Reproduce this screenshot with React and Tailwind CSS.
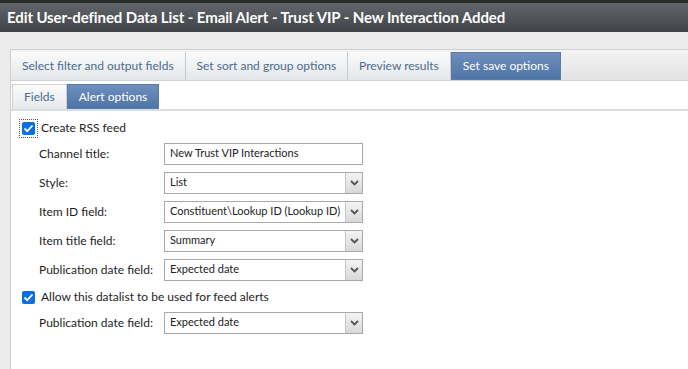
import React from "react";

const font = { fontFamily: '"Segoe UI", Lato, sans-serif' };

const Chevron = () => (
  <svg width="9" height="6" viewBox="0 0 9 6">
    <path d="M1 1 L4.5 4.5 L8 1" stroke="#555" strokeWidth="1.8" fill="none" />
  </svg>
);

const Checkbox = ({ focus }) => (
  <span className={`inline-flex items-center justify-center ${focus ? "outline-1 outline-dotted outline-[#555] outline-offset-[2px]" : ""}`}>
    <span className="w-[13px] h-[13px] rounded-[2px] bg-[#0a6fe0] flex items-center justify-center">
      <svg width="11" height="9" viewBox="0 0 11 9">
        <path d="M1.5 4.5 L4.2 7.2 L9.5 1.5" stroke="white" strokeWidth="1.8" fill="none" />
      </svg>
    </span>
  </span>
);

const Select = ({ value }) => (
  <div className="w-[199px] h-[22px] border border-[#a9a9a9] bg-white flex">
    <div className="flex-1 px-[5px] flex items-center text-[11px] text-[#222] whitespace-nowrap overflow-hidden">{value}</div>
    <div className="w-[17px] border-l border-[#c4c4c4] bg-gradient-to-b from-[#f4f4f4] to-[#d8d8d8] flex items-center justify-center">
      <Chevron />
    </div>
  </div>
);

const Row = ({ label, children }) => (
  <div className="flex items-center h-[29px] pl-[28px]">
    <div className="w-[125px] text-[12px] text-[#1e1e1e] whitespace-nowrap">{label}</div>
    {children}
  </div>
);

const tabs = [
  ["Select filter and output fields", false],
  ["Set sort and group options", false],
  ["Preview results", false],
  ["Set save options", true],
];

export default function App() {
  return (
    <div className="w-[688px] h-[369px] bg-[#ececec] flex flex-col overflow-hidden" style={font}>
      <div className="h-[3px] bg-[#2b2b2b]" />
      <div className="h-[29px] bg-gradient-to-b from-[#62656a] to-[#404347] flex items-center px-[7px]">
        <span className="text-white font-bold text-[15px] whitespace-nowrap tracking-[-0.1px]">
          Edit User-defined Data List - Email Alert - Trust VIP - New Interaction Added
        </span>
      </div>
      <div className="flex-1 pt-[17px] pl-[10px] flex flex-col">
        <div className="flex-1 border-l border-t border-[#cfcfcf] bg-white flex flex-col">
          {/* main tabs */}
          <div className="h-[31px] pt-[2px] bg-gradient-to-b from-[#f4f4f4] to-[#e2e2e2] border-b border-[#d2d2d2] flex">
            {tabs.map(([t, active]) =>
              active ? (
                <div key={t} className="px-[11px] flex items-center bg-gradient-to-b from-[#6d8fbd] to-[#4f74a6] border border-[#5a7cab] text-white text-[12px]">
                  {t}
                </div>
              ) : (
                <div key={t} className="px-[11px] flex items-center bg-gradient-to-b from-[#fafbfc] to-[#e3e7ea] border-r border-[#c9c9c9] text-[#4d6c8c] text-[12px]">
                  {t}
                </div>
              )
            )}
          </div>
          {/* sub tabs */}
          <div className="h-[30px] pt-[3px] pl-[1px] border-b-2 border-[#dcdcdc] flex">
            <div className="px-[11px] flex items-center bg-gradient-to-b from-[#fafbfc] to-[#e6e9ec] border border-[#d0d0d0] border-b-0 text-[#4d6c8c] text-[12px]">
              Fields
            </div>
            <div className="px-[11px] flex items-center bg-gradient-to-b from-[#6d8fbd] to-[#4f74a6] border border-[#5a7cab] text-white text-[12px]">
              Alert options
            </div>
          </div>
          {/* content */}
          <div className="pt-[6px] flex flex-col">
            <div className="flex items-center gap-[6px] pl-[11px] h-[22px]">
              <Checkbox focus />
              <span className="text-[12px] text-[#1e1e1e]">Create RSS feed</span>
            </div>
            <div className="flex flex-col">
              <Row label="Channel title:">
                <div className="w-[199px] h-[22px] border border-[#a9a9a9] bg-white px-[5px] flex items-center text-[11px] text-[#222]">
                  New Trust VIP Interactions
                </div>
              </Row>
              <Row label="Style:">
                <Select value="List" />
              </Row>
              <Row label="Item ID field:">
                <Select value="Constituent\Lookup ID (Lookup ID)" />
              </Row>
              <Row label="Item title field:">
                <Select value="Summary" />
              </Row>
              <Row label="Publication date field:">
                <Select value="Expected date" />
              </Row>
            </div>
            <div className="flex items-center gap-[6px] pl-[11px] h-[22px] mt-[2px]">
              <Checkbox />
              <span className="text-[12px] text-[#1e1e1e]">Allow this datalist to be used for feed alerts</span>
            </div>
            <Row label="Publication date field:">
              <Select value="Expected date" />
            </Row>
          </div>
        </div>
      </div>
    </div>
  );
}
